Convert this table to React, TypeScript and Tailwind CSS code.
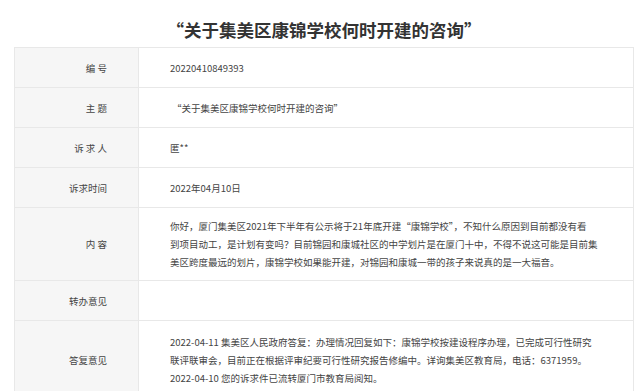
import React from "react";

const font = { fontFamily: '"Noto Sans CJK SC", "Microsoft YaHei", sans-serif' };

type Row = {
    label: string;
    value: React.ReactNode;
    valueClass?: string;
};

const rows: Row[] = [
    { label: "编 号", value: "20220410849393", valueClass: "h-[39px] items-center" },
    { label: "主 题", value: "“关于集美区康锦学校何时开建的咨询”", valueClass: "h-[39px] items-center pl-[33px]" },
    { label: "诉 求 人", value: "匿**", valueClass: "h-[39px] items-center" },
    { label: "诉求时间", value: "2022年04月10日", valueClass: "h-[39px] items-center" },
    {
        label: "内 容",
        value: (
            <div className="whitespace-nowrap">
                <p>你好，厦门集美区2021年下半年有公示将于21年底开建“康锦学校”，不知什么原因到目前都没有看</p>
                <p>到项目动工，是计划有变吗？目前锦园和康城社区的中学划片是在厦门十中，不得不说这可能是目前集</p>
                <p>美区跨度最远的划片，康锦学校如果能开建，对锦园和康城一带的孩子来说真的是一大福音。</p>
            </div>
        ),
        valueClass: "py-[9px]"
    },
    { label: "转办意见", value: "", valueClass: "h-[39px] items-center" },
    {
        label: "答复意见",
        value: (
            <div className="whitespace-nowrap">
                <p>2022-04-11 集美区人民政府答复：办理情况回复如下：康锦学校按建设程序办理，已完成可行性研究</p>
                <p>联评联审会，目前正在根据评审纪要可行性研究报告修编中。详询集美区教育局，电话：6371959。</p>
                <p>2022-04-10 您的诉求件已流转厦门市教育局阅知。</p>
            </div>
        ),
        valueClass: "py-[12px]"
    }
];

export default function App() {
    return (
        <div className="min-h-screen bg-white pl-[14px] pr-[6px]" style={font}>
            {/* Title */}
            <h1 className="h-[47px] pt-[20px] text-center text-[17.5px] font-bold leading-[20px] text-[#333]">
                “关于集美区康锦学校何时开建的咨询”
            </h1>

            {/* Detail table */}
            <div className="border-l border-r border-t border-[#e8e8e8] text-[9.5px] leading-[18px]">
                {rows.map((row) => (
                    <div key={row.label} className="flex border-b border-[#e8e8e8]">
                        <div className="flex w-[124px] shrink-0 items-center justify-end border-r border-[#e8e8e8] bg-[#f6f6f6] pr-[31px] text-[#444]">
                            {row.label}
                        </div>
                        <div className={`flex flex-1 pl-[31px] text-[#444] ${row.valueClass ?? ""}`}>
                            {row.value}
                        </div>
                    </div>
                ))}
            </div>
        </div>
    );
}
